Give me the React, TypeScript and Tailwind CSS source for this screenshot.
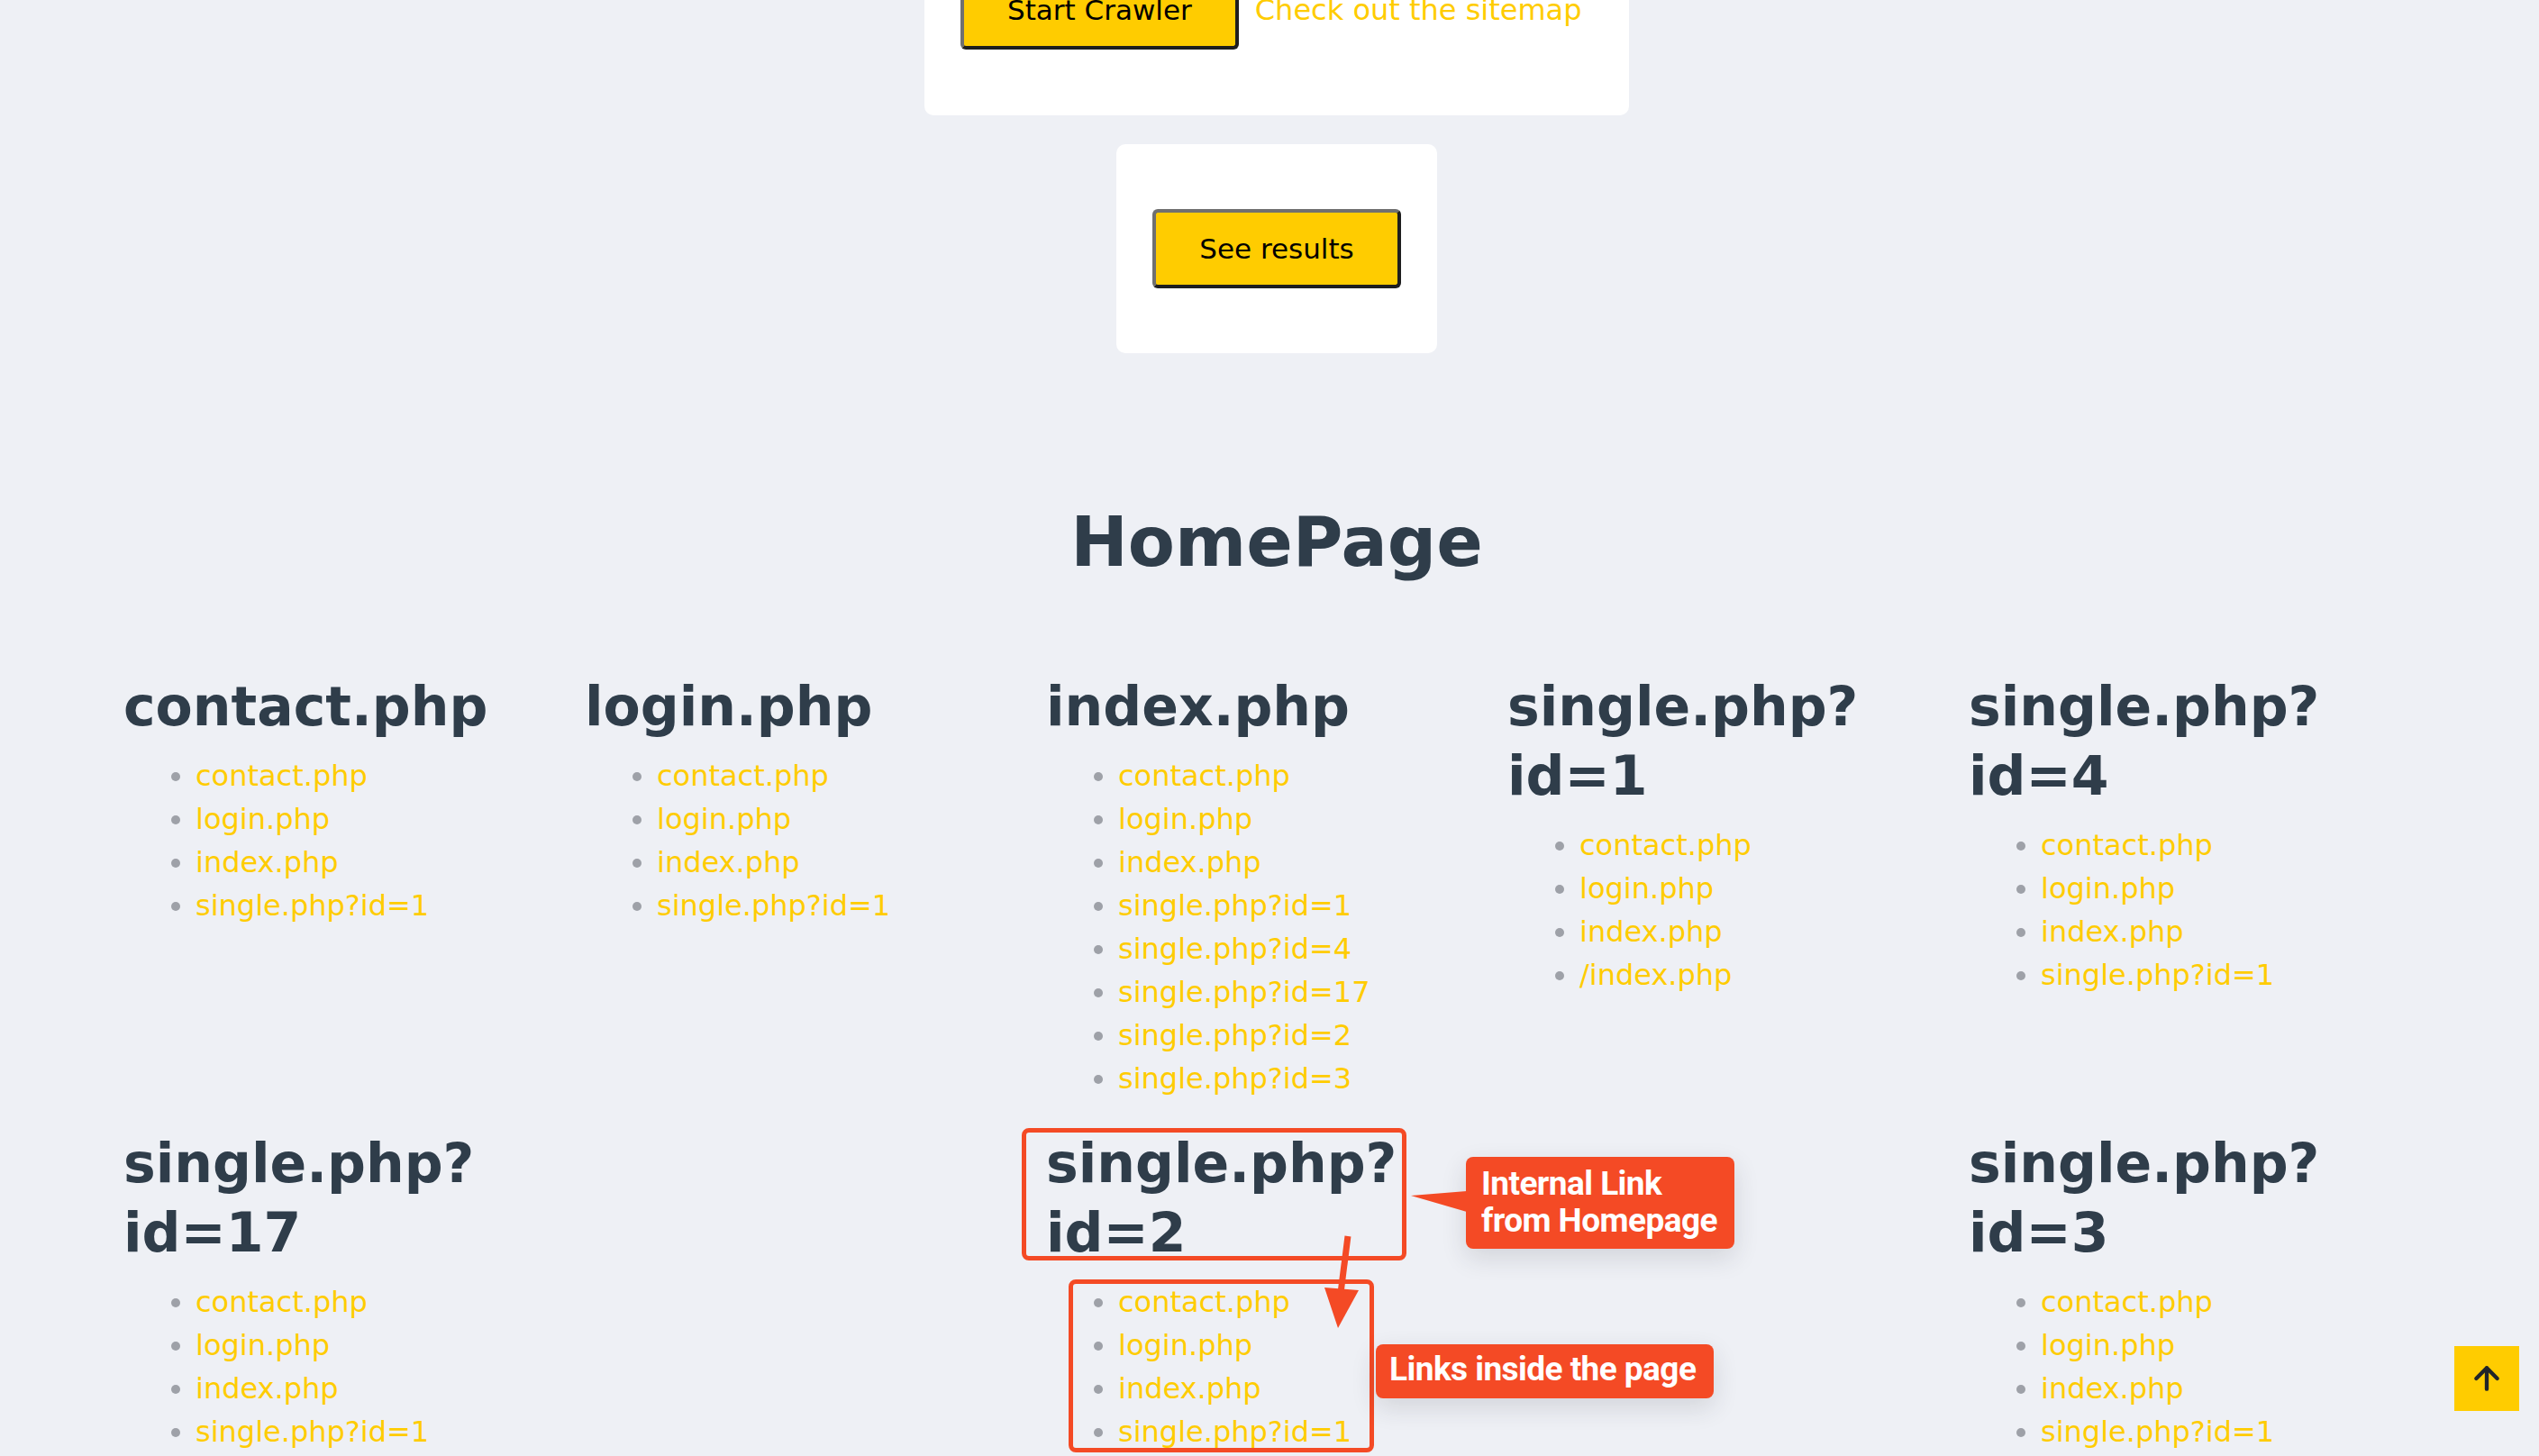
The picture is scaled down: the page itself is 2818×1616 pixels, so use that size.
import { ArrowUp } from "lucide-react";

type Page = {
    name: string[];
    links: string[];
    annotated?: boolean;
};

const base = ["contact.php", "login.php", "index.php", "single.php?id=1"];

const pages: (Page | null)[] = [
    { name: ["contact.php"], links: base },
    { name: ["login.php"], links: base },
    {
        name: ["index.php"],
        links: [
            "contact.php",
            "login.php",
            "index.php",
            "single.php?id=1",
            "single.php?id=4",
            "single.php?id=17",
            "single.php?id=2",
            "single.php?id=3",
        ],
    },
    { name: ["single.php?", "id=1"], links: ["contact.php", "login.php", "index.php", "/index.php"] },
    { name: ["single.php?", "id=4"], links: base },
    { name: ["single.php?", "id=17"], links: base },
    null,
    { name: ["single.php?", "id=2"], links: base, annotated: true },
    null,
    { name: ["single.php?", "id=3"], links: base },
];

const Annotations = () => (
    <>
        {/* box around heading */}
        <div className="absolute left-[-27px] top-[-1px] h-[147px] w-[427px] rounded-[8px] border-[5px] border-[#f44a25]" />
        {/* box around links */}
        <div className="absolute left-[25px] top-[167px] h-[192px] w-[339px] rounded-[8px] border-[5px] border-[#f44a25]" />

        {/* arrow from heading to links */}
        <svg className="absolute left-[300px] top-[110px]" width="60" height="120" viewBox="0 0 60 120">
            <line x1="35" y1="9" x2="27" y2="72" stroke="#f44a25" strokeWidth="7" />
            <polygon points="9,66 47,69 24,111" fill="#f44a25" />
        </svg>

        <div className="absolute left-[466px] top-[31px] w-[298px] rounded-[8px] bg-[#f44a25] pl-[17px] pt-[9px] pb-[11px] font-['Roboto',sans-serif] text-[37px] leading-[41px] font-bold tracking-[-0.015em] text-white shadow-[0_10px_28px_rgba(40,40,60,0.14)]">
            <svg className="absolute left-[-61px] top-[38px]" width="62" height="23" viewBox="0 0 62 23">
                <polygon points="62,0 0,5 62,23" fill="#f44a25" />
            </svg>
            Internal Link
            <br />
            from Homepage
        </div>

        <div className="absolute left-[366px] top-[239px] h-[60px] w-[375px] rounded-[8px] bg-[#f44a25] pl-[15px] pt-[7px] font-['Roboto',sans-serif] text-[37px] leading-[41px] font-bold tracking-[-0.015em] text-white shadow-[0_10px_28px_rgba(40,40,60,0.14)]">
            Links inside the page
        </div>
    </>
);

const PageColumn = ({ page }: { page: Page }) => (
    <div className="relative">
        <h2 className="text-[60px] leading-[77px] font-bold text-[#2f3d4a]">
            {page.name.map((part, i) => (
                <span key={i}>
                    {i > 0 && <br />}
                    {part}
                </span>
            ))}
        </h2>
        <ul className="mt-[14px] mb-[32px] list-disc pl-[80px] text-[32px] leading-[48px] text-[#9ea1a8]">
            {page.links.map((link, i) => (
                <li key={i}>
                    <a href="#" className="text-[#ffcc00]">
                        {link}
                    </a>
                </li>
            ))}
        </ul>
        {page.annotated && <Annotations />}
    </div>
);

const crawlButton =
    "rounded-[6px] border-4 border-t-[#707070] border-l-[#707070] border-r-[#1e1e1e] border-b-[#1e1e1e] bg-[#ffcc00] px-[48px] py-[16px] text-[31px] leading-[48px] text-black";

export default function App() {
    return (
        <div className="min-h-screen overflow-hidden bg-[#eef0f5] pl-[16px] font-['DejaVu_Sans',sans-serif]">
            <div className="mx-auto mt-[-105px] w-[782px] rounded-[10px] bg-white px-[40px] pt-[72px] pb-[73px]">
                <div className="flex items-baseline gap-[18px]">
                    <button className={crawlButton}>Start Crawler</button>
                    <a href="#" className="text-[32px] text-[#ffcc00]">
                        Check out the sitemap
                    </a>
                </div>
            </div>

            <div className="mx-auto mt-[32px] w-fit rounded-[10px] bg-white px-[40px] py-[72px]">
                <button className={crawlButton}>See results</button>
            </div>

            <h1 className="mt-[164px] text-center text-[76px] leading-[92px] font-bold text-[#2f3d4a]">
                HomePage
            </h1>

            <div className="mx-auto mt-[98px] grid w-[2560px] grid-cols-5">
                {pages.map((page, i) =>
                    page ? <PageColumn key={i} page={page} /> : <div key={i} />
                )}
            </div>

            <button className="fixed right-[22px] bottom-[50px] flex h-[72px] w-[72px] items-center justify-center bg-[#ffcc00] text-[#212529]">
                <ArrowUp size={40} strokeWidth={2.6} />
            </button>
        </div>
    );
}
